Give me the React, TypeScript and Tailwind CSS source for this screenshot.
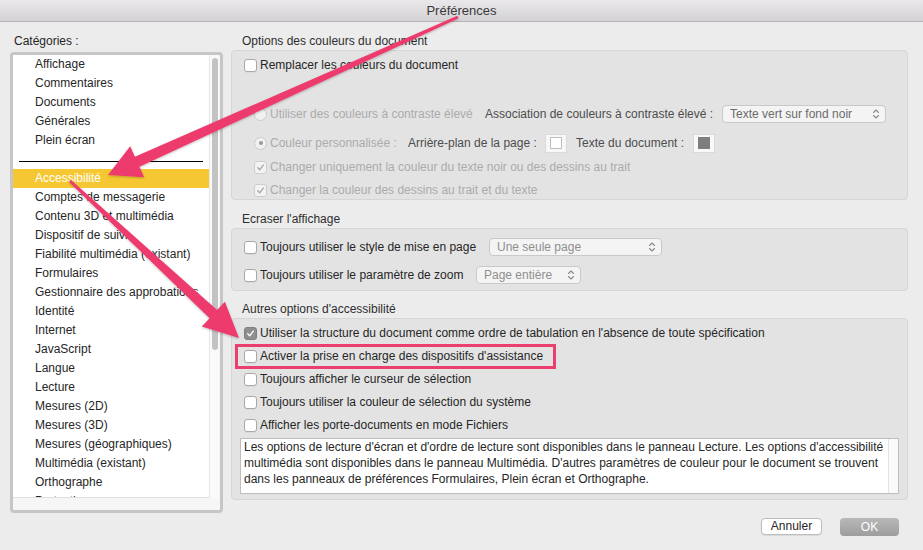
import React from 'react';

type BoxState = 'off' | 'on' | 'onDim';

const Check = ({ color }: { color: string }) => (
  <svg viewBox="0 0 13 13" className="w-[13px] h-[13px]">
    <path d="M3.2 6.8 L5.6 9.2 L9.8 3.6" fill="none" stroke={color} strokeWidth="1.6" strokeLinecap="round" strokeLinejoin="round" />
  </svg>
);

const CheckBox = ({ state = 'off' }: { state?: BoxState }) => {
  if (state === 'on')
    return (
      <div className="w-[13px] h-[13px] shrink-0 rounded-[3px] bg-[#8e8e8e] border border-[#808080] flex items-center justify-center">
        <Check color="#ffffff" />
      </div>
    );
  if (state === 'onDim')
    return (
      <div className="w-[13px] h-[13px] shrink-0 rounded-[3px] bg-[#f3f3f3] border border-[#cdcdcd] flex items-center justify-center">
        <Check color="#a6a6a6" />
      </div>
    );
  return <div className="w-[13px] h-[13px] shrink-0 rounded-[3px] bg-white border border-[#a8a8a8] shadow-[0_1px_0_rgba(0,0,0,0.04)]" />;
};

const Radio = ({ on }: { on?: boolean }) => (
  <div className="w-[13px] h-[13px] shrink-0 rounded-full bg-[#f1f1f1] border border-[#cbcbcb] flex items-center justify-center">
    {on && <div className="w-[4px] h-[4px] rounded-full bg-[#9a9a9a]" />}
  </div>
);

const Chevrons = () => (
  <svg viewBox="0 0 8 12" className="w-[8px] h-[12px]">
    <path d="M1.5 4.5 L4 2 L6.5 4.5 M1.5 7.5 L4 10 L6.5 7.5" fill="none" stroke="#8a8a8a" strokeWidth="1.1" strokeLinecap="round" strokeLinejoin="round" />
  </svg>
);

const Select = ({ label, className, dark }: { label: string; className: string; dark?: boolean }) => (
  <div
    className={`h-[18px] shrink-0 rounded-[4px] border border-[#c9c9c9] bg-[#f4f4f4] flex items-center justify-between pl-[7px] pr-[5px] ${
      dark ? 'text-[#6b6b6b]' : 'text-[#8f8f8f]'
    } ${className}`}
  >
    <span className="whitespace-nowrap">{label}</span>
    <Chevrons />
  </div>
);

const Well = ({ fill }: { fill: string }) => (
  <div className="w-[22px] h-[19px] shrink-0 bg-[#f8f8f8] border border-[#dadada] flex items-center justify-center">
    <div className={`w-[12px] h-[12px] border ${fill}`} />
  </div>
);

const Row = ({ children, className = '' }: { children: React.ReactNode; className?: string }) => (
  <div className={`flex items-center whitespace-nowrap ${className}`}>{children}</div>
);

const categories1 = ['Affichage', 'Commentaires', 'Documents', 'Générales', 'Plein écran'];
const categories2 = [
  'Comptes de messagerie',
  'Contenu 3D et multimédia',
  'Dispositif de suivi',
  'Fiabilité multimédia (existant)',
  'Formulaires',
  'Gestionnaire des approbations',
  'Identité',
  'Internet',
  'JavaScript',
  'Langue',
  'Lecture',
  'Mesures (2D)',
  'Mesures (3D)',
  'Mesures (géographiques)',
  'Multimédia (existant)',
  'Orthographe',
  'Protection',
];

// tapered annotation arrow, tail -> tip
function arrowPoints(x1: number, y1: number, x2: number, y2: number, head = 34, wing = 17, w0 = 1.4, w1 = 5.5) {
  const dx = x2 - x1;
  const dy = y2 - y1;
  const len = Math.hypot(dx, dy);
  const ux = dx / len;
  const uy = dy / len;
  const px = -uy;
  const py = ux;
  const bx = x2 - ux * head;
  const by = y2 - uy * head;
  const pts = [
    [x1 + px * w0, y1 + py * w0],
    [bx + px * w1, by + py * w1],
    [bx + px * wing, by + py * wing],
    [x2, y2],
    [bx - px * wing, by - py * wing],
    [bx - px * w1, by - py * w1],
    [x1 - px * w0, y1 - py * w0],
  ];
  return pts.map((p) => p.map((n) => n.toFixed(1)).join(',')).join(' ');
}

export default function App() {
  return (
    <div className="relative w-[923px] h-[550px] overflow-hidden bg-[#ececec] text-[12px] leading-[15px] text-[#262626] font-['Liberation_Sans',Arial,sans-serif]">
      {/* title bar */}
      <div className="h-[22px] bg-linear-to-b from-[#eae8ea] to-[#d4d2d4] border-b border-[#b4b4b4] flex items-center justify-center text-[13px] text-[#3a3a3a]">
        Préférences
      </div>

      <div className="flex pl-[10px] pt-[12px]">
        {/* categories */}
        <div className="w-[213px] shrink-0">
          <div className="pl-[4px] h-[15px]">Catégories :</div>
          <div className="mt-[3px] h-[461px] rounded-[4px] border-[3px] border-[#c6c6c6] bg-[#f6f6f6]">
            <div className="flex">
              <div className="w-[196px] h-[443px] bg-white overflow-hidden border-b border-[#dedede]">
                {categories1.map((c) => (
                  <div key={c} className="h-[19px] flex items-center pl-[22px] whitespace-nowrap">
                    {c}
                  </div>
                ))}
                <div className="h-[19px] pt-[11px] px-[6px]">
                  <div className="h-px bg-black" />
                </div>
                <div className="h-[19px] flex items-center pl-[22px] bg-[#f5c833] text-white">Accessibilité</div>
                {categories2.map((c) => (
                  <div key={c} className="h-[19px] flex items-center pl-[22px] whitespace-nowrap">
                    {c}
                  </div>
                ))}
              </div>
              <div className="w-[10px] h-[443px] border-l border-[#e6e6e6] bg-[#fafafa] pt-[3px]">
                <div className="mx-auto w-[6px] h-[292px] rounded-full bg-[#c3c3c3]" />
              </div>
            </div>
          </div>
        </div>

        {/* options */}
        <div className="ml-[8px] w-[677px] shrink-0">
          <div className="pl-[11px] h-[15px] text-[#2e2e2e]">Options des couleurs du document</div>
          <div className="mt-px h-[150px] rounded-[4px] border border-[#d6d6d6] bg-[#e3e3e3]">
            <Row className="mt-[5px] h-[18px] pl-[12px] gap-[3px]">
              <CheckBox />
              <span>Remplacer les couleurs du document</span>
            </Row>
            <Row className="mt-[29px] h-[22px] pl-[22px]">
              <Radio />
              <span className="ml-[3px] w-[215px] text-[#ababab]">Utiliser des couleurs à contraste élevé</span>
              <span className="w-[237px] text-[#4d4d4d]">Association de couleurs à contraste élevé :</span>
              <Select label="Texte vert sur fond noir" className="w-[164px]" dark />
            </Row>
            <Row className="mt-[7px] h-[22px] pl-[22px]">
              <Radio on />
              <span className="ml-[3px] w-[138px] text-[#ababab]">Couleur personnalisée :</span>
              <span className="w-[137px] text-[#4d4d4d]">Arrière-plan de la page :</span>
              <Well fill="bg-white border-[#bdbdbd]" />
              <span className="ml-[9px] w-[117px] text-[#4d4d4d]">Texte du document :</span>
              <Well fill="bg-[#7e7e7e] border-[#7e7e7e]" />
            </Row>
            <Row className="mt-[2px] h-[22px] pl-[22px] gap-[3px]">
              <CheckBox state="onDim" />
              <span className="text-[#ababab]">Changer uniquement la couleur du texte noir ou des dessins au trait</span>
            </Row>
            <Row className="mt-px h-[22px] pl-[22px] gap-[3px]">
              <CheckBox state="onDim" />
              <span className="text-[#ababab]">Changer la couleur des dessins au trait et du texte</span>
            </Row>
          </div>

          <div className="mt-[12px] pl-[11px] h-[15px] text-[#2e2e2e]">Ecraser l'affichage</div>
          <div className="mt-px h-[63px] rounded-[4px] border border-[#d6d6d6] bg-[#e3e3e3]">
            <Row className="mt-[7px] h-[22px] pl-[12px]">
              <CheckBox />
              <span className="ml-[3px] w-[229px]">Toujours utiliser le style de mise en page</span>
              <Select label="Une seule page" className="w-[173px]" />
            </Row>
            <Row className="mt-[6px] h-[22px] pl-[12px]">
              <CheckBox />
              <span className="ml-[3px] w-[216px]">Toujours utiliser le paramètre de zoom</span>
              <Select label="Page entière" className="w-[105px]" />
            </Row>
          </div>

          <div className="mt-[11px] pl-[11px] h-[15px] text-[#2e2e2e]">Autres options d'accessibilité</div>
          <div className="relative mt-px h-[182px] rounded-[4px] border border-[#d6d6d6] bg-[#e3e3e3] pt-[3px]">
            <Row className="h-[23px] pl-[12px] gap-[3px]">
              <CheckBox state="on" />
              <span>Utiliser la structure du document comme ordre de tabulation en l'absence de toute spécification</span>
            </Row>
            <Row className="h-[23px] pl-[12px] gap-[3px]">
              <CheckBox />
              <span>Activer la prise en charge des dispositifs d'assistance</span>
            </Row>
            <Row className="h-[23px] pl-[12px] gap-[3px]">
              <CheckBox />
              <span>Toujours afficher le curseur de sélection</span>
            </Row>
            <Row className="h-[23px] pl-[12px] gap-[3px]">
              <CheckBox />
              <span>Toujours utiliser la couleur de sélection du système</span>
            </Row>
            <Row className="h-[23px] pl-[12px] gap-[3px]">
              <CheckBox />
              <span>Afficher les porte-documents en mode Fichiers</span>
            </Row>
            <div className="mt-px ml-[8px] w-[659px] h-[56px] border border-[#bebebe] bg-white flex">
              <div className="flex-1 pl-[3px] leading-[16px] whitespace-nowrap">
                Les options de lecture d'écran et d'ordre de lecture sont disponibles dans le panneau Lecture. Les options d'accessibilité
                <br />
                multimédia sont disponibles dans le panneau Multimédia. D'autres paramètres de couleur pour le document se trouvent
                <br />
                dans les panneaux de préférences Formulaires, Plein écran et Orthographe.
              </div>
              <div className="w-[10px] border-l border-[#e4e4e4] bg-[#fafafa]" />
            </div>
            {/* annotation box */}
            <div className="absolute left-[3px] top-[25px] w-[321px] h-[25px] border-[3px] border-[#ea3f6f]" />
          </div>

          <div className="mt-[18px] pr-[9px] flex justify-end items-start gap-[18px]">
            <div className="w-[61px] h-[17px] rounded-[4px] border border-[#bcbcbc] bg-white shadow-[0_1px_1px_rgba(0,0,0,0.08)] flex items-center justify-center text-[#262626]">
              Annuler
            </div>
            <div className="w-[59px] h-[18px] rounded-[4px] bg-linear-to-b from-[#b8b8b8] to-[#9d9d9d] flex items-center justify-center text-white">
              OK
            </div>
          </div>
        </div>
      </div>

      {/* annotation arrows */}
      <svg className="absolute inset-0 pointer-events-none" width="923" height="550" viewBox="0 0 923 550">
        <defs>
          <filter id="sh" x="-10%" y="-10%" width="120%" height="120%">
            <feDropShadow dx="0" dy="1" stdDeviation="1" floodColor="#000" floodOpacity="0.25" />
          </filter>
        </defs>
        <g fill="#ee3b6e" filter="url(#sh)">
          <polygon points={arrowPoints(458, 17, 108, 175, 32, 17)} />
          <polygon points={arrowPoints(70, 181, 239, 338, 35, 17)} />
        </g>
      </svg>
    </div>
  );
}
